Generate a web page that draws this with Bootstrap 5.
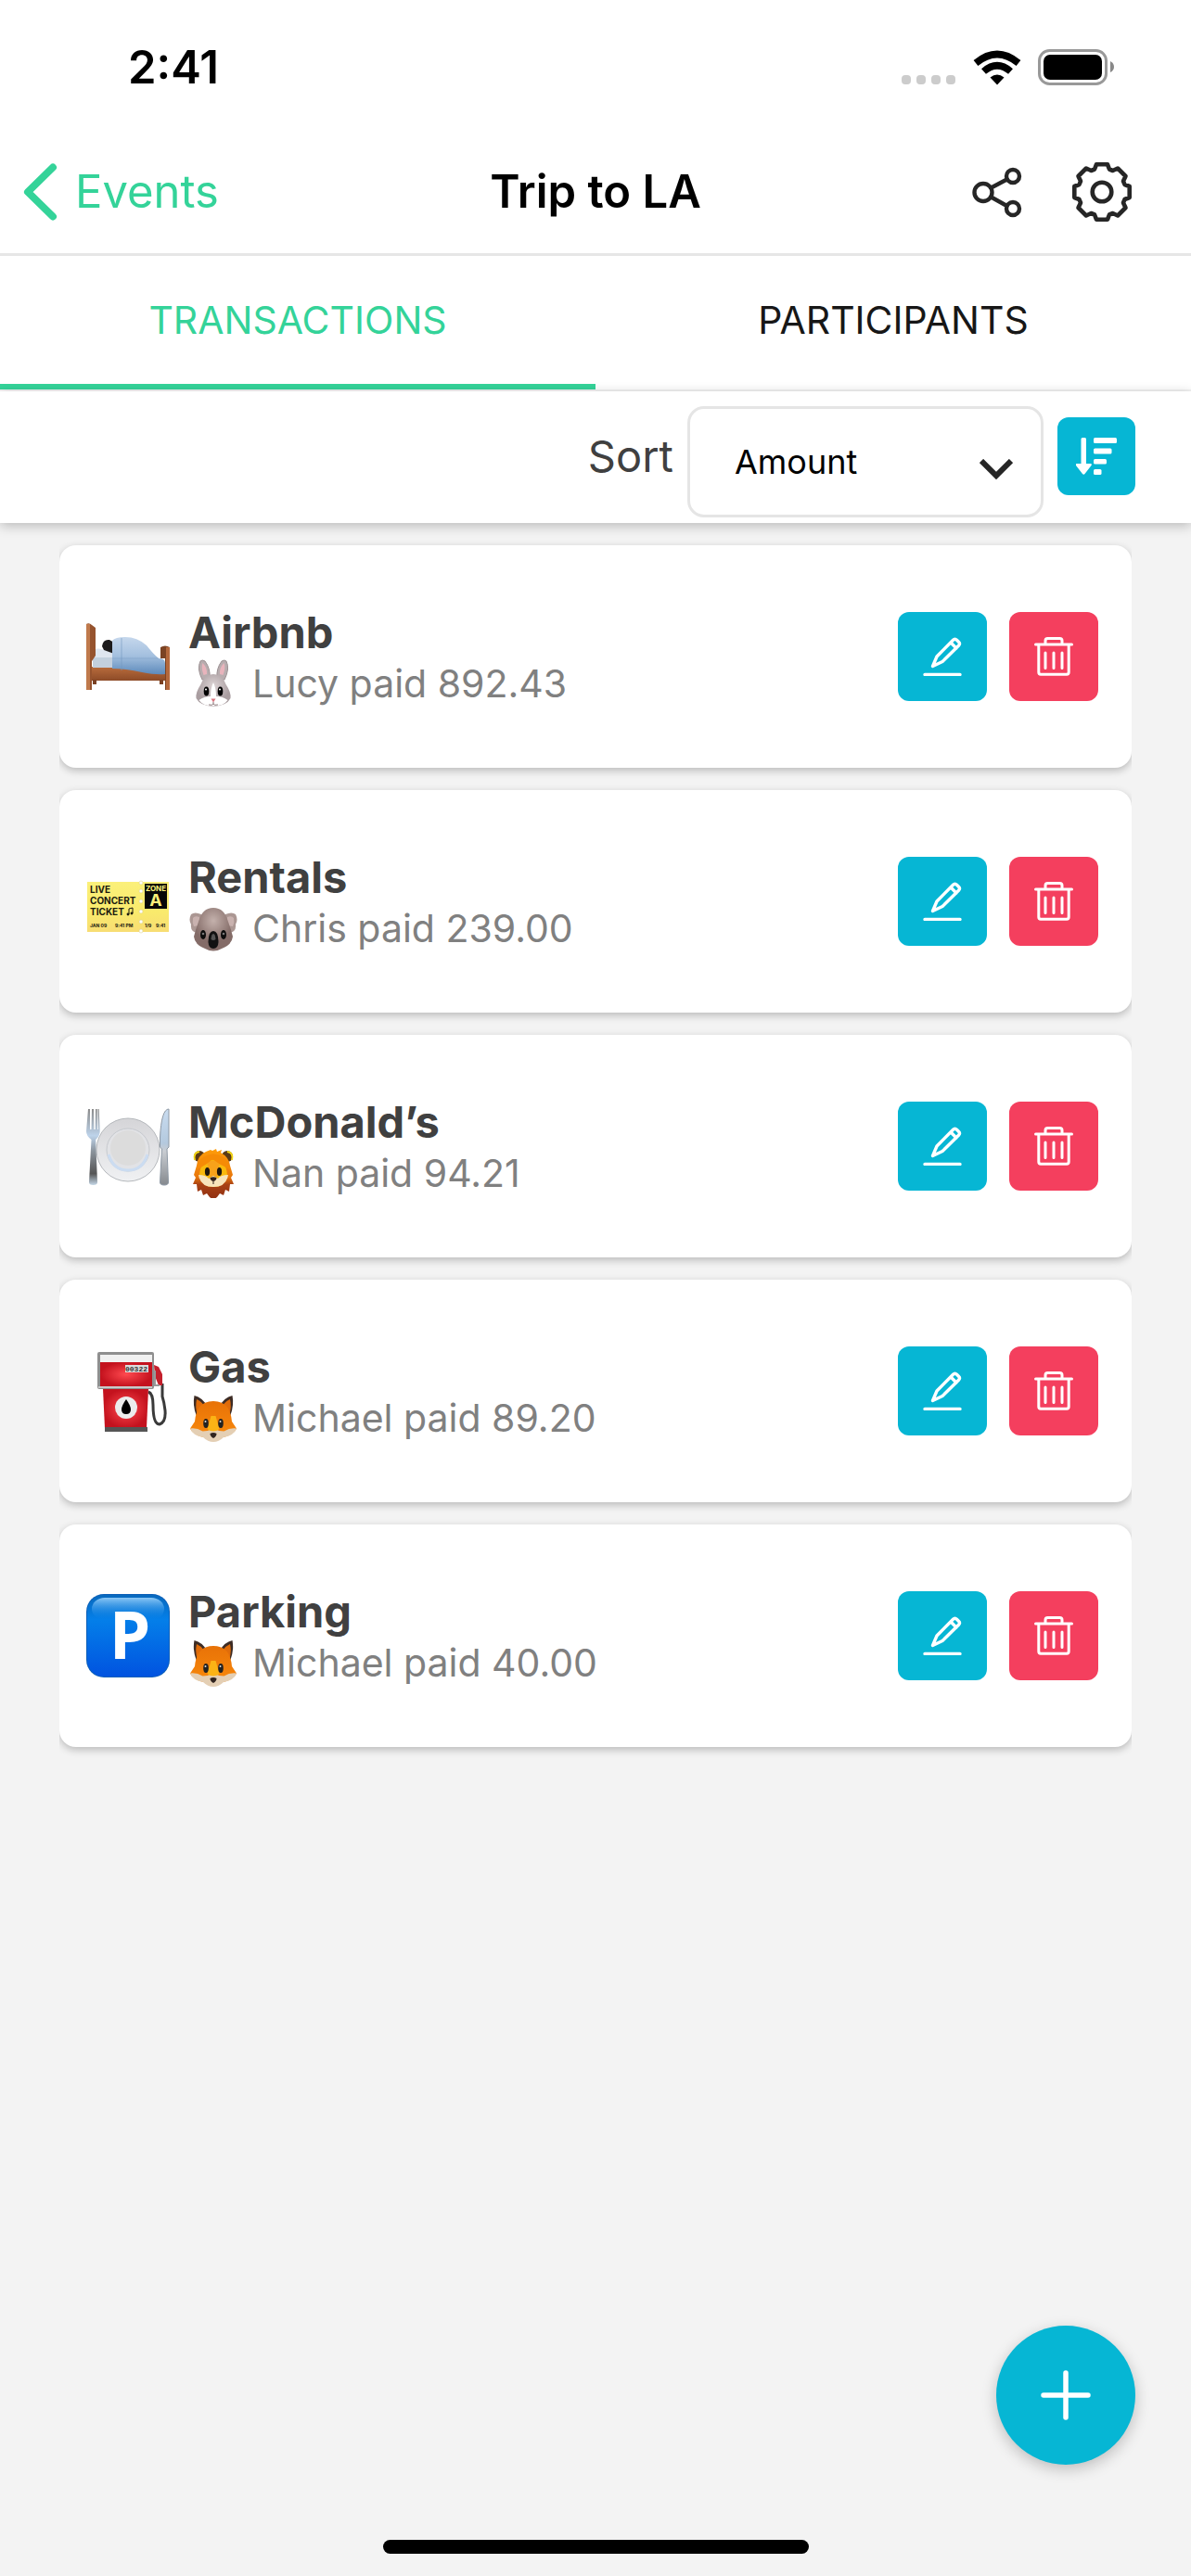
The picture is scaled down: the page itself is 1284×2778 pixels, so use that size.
<!DOCTYPE html>
<html lang="en">
<head>
<meta charset="utf-8">
<meta name="viewport" content="width=device-width, initial-scale=1">
<title>Trip to LA</title>
<link href="https://cdn.jsdelivr.net/npm/bootstrap@5.3.0/dist/css/bootstrap.min.css" rel="stylesheet">
<style>
  :root { --mint: #34d399; --cyan: #06b6d4; --rose: #f43f5e; --ink: #404040; }
  body { font-family: Inter, "Liberation Sans", sans-serif; font-size: 41px; line-height: 54px; background: #f3f3f3; color: #000; }
  .status-bar { height: 141px; padding: 4px 82px 0 138px; }
  .clock { font-size: 49px; font-weight: 600; }
  .top-nav { height: 135px; padding: 0 64px 0 25px; border-bottom: 3px solid #e6e6e6; font-size: 49px; }
  .nav-side { flex: 1 1 0; }
  .nav-start { padding-right: 39px; }
  .back-link { color: var(--mint); gap: 18px; }
  .page-title { font-size: 49px; line-height: 54px; font-weight: 600; }
  .icon-actions { gap: 52px; }
  .icon-btn { color: #262626; }
  .tab-strip .nav-link { height: 144px; border: 0; border-bottom: 6px solid transparent; border-radius: 0; background: none; color: #171717; padding: 0; }
  .tab-strip .nav-link.active { color: var(--mint); border-color: var(--mint); background: none; }
  .tab-strip { border-bottom: 2px solid #f3f3f3; }
  .sort-row { padding: 16px 60px 6px; gap: 15px; box-shadow: 0 3px 12px rgba(0,0,0,.24); position: relative; }
  .sort-label { font-size: 47px; color: var(--ink); margin-bottom: 12px; }
  .sort-select { width: 384px; height: 120px; padding: 0 90px 0 48px; border: 3px solid #e5e5e5; border-radius: 18px; font-size: 36px; color: #000;
    background-image: url("data:image/svg+xml,%3csvg xmlns='http://www.w3.org/2000/svg' viewBox='0 0 36 22'%3e%3cpath fill='none' stroke='%23262626' stroke-width='6' d='M2 2l16 16L34 2'/%3e%3c/svg%3e");
    background-size: 36px 22px; background-position: right 30px top 54px; }
  .tool-btn { width: 96px; height: 96px; border: 0; border-radius: 12px; color: #fff; padding: 0; }
  .tool-cyan { background: var(--cyan); }
  .tool-rose { background: var(--rose); }
  .sort-dir { width: 84px; height: 84px; margin-bottom: 12px; }
  .entries { gap: 24px; padding: 24px 64px; }
  .entry { height: 240px; padding: 0 36px 0 29px; border-radius: 18px; background: #fff; box-shadow: 0 3px 9px rgba(0,0,0,.24); clip-path: inset(-20px 0); }
  .entry-main { gap: 20px; }
  .entry-text { padding-top: 2px; }
  .entry-name { font-size: 47px; line-height: 56px; font-weight: 700; color: var(--ink); }
  .entry-sub { gap: 15px; color: #808080; }
  .entry-tools { gap: 24px; }
  .add-btn { width: 150px; height: 150px; right: 60px; bottom: 120px; border: 0; background: var(--cyan); color: #fff; box-shadow: 0 5px 16px rgba(0,0,0,.22); }
  .home-bar { width: 459px; height: 15px; border-radius: 8px; background: #000; margin-bottom: 24px; }
  svg { display: block; flex: none; }
  .ln { fill: none; stroke: currentColor; stroke-linecap: round; stroke-linejoin: round; }
</style>
<script src="https://cdn.jsdelivr.net/npm/bootstrap@5.3.0/dist/js/bootstrap.bundle.min.js" defer></script>
</head>
<body class="min-vh-100 d-flex flex-column">

<svg width="0" height="0" class="position-absolute" aria-hidden="true">
  <defs>
    <linearGradient id="wood" x1="0" x2="0" y1="0" y2="1"><stop offset="0" stop-color="#b96c3d"/><stop offset="1" stop-color="#8d4b27"/></linearGradient>
    <linearGradient id="quilt" x1="0" x2="0" y1="0" y2="1"><stop offset="0" stop-color="#c5d7ec"/><stop offset=".5" stop-color="#a4c0df"/><stop offset="1" stop-color="#5d8abb"/></linearGradient>
    <linearGradient id="paper" x1="0" x2="0" y1="0" y2="1"><stop offset="0" stop-color="#fbf07a"/><stop offset=".6" stop-color="#f9ea6c"/><stop offset="1" stop-color="#f8dd74"/></linearGradient>
    <linearGradient id="steel" x1="0" x2="0" y1="0" y2="1"><stop offset="0" stop-color="#8b8b8b"/><stop offset=".35" stop-color="#bdd3ea"/><stop offset=".55" stop-color="#8c959e"/><stop offset=".85" stop-color="#555"/><stop offset="1" stop-color="#c5d8e8"/></linearGradient>
    <linearGradient id="blade" x1="0" x2="0" y1="0" y2="1"><stop offset="0" stop-color="#c9dcf0"/><stop offset=".45" stop-color="#b4c9de"/><stop offset=".55" stop-color="#c9cdd2"/><stop offset="1" stop-color="#85898e"/></linearGradient>
    <linearGradient id="dish" x1="0" x2="0" y1="0" y2="1"><stop offset="0" stop-color="#d5d5d8"/><stop offset="1" stop-color="#f0f1f3"/></linearGradient>
    <radialGradient id="red"><stop offset="0" stop-color="#ff4a50"/><stop offset="1" stop-color="#c4121e"/></radialGradient>
    <linearGradient id="blue" x1="0" x2="0" y1="0" y2="1"><stop offset="0" stop-color="#0869bd"/><stop offset=".3" stop-color="#047fe9"/><stop offset="1" stop-color="#0153e0"/></linearGradient>
    <linearGradient id="gloss" x1="0" x2="0" y1="0" y2="1"><stop offset="0" stop-color="#8cc8f6"/><stop offset="1" stop-color="#047fe9" stop-opacity="0"/></linearGradient>
    <radialGradient id="fur" cy=".35"><stop offset="0" stop-color="#dcd3d4"/><stop offset="1" stop-color="#a99da0"/></radialGradient>
    <radialGradient id="koalaFur" cy=".3"><stop offset="0" stop-color="#c4b1ac"/><stop offset="1" stop-color="#846c68"/></radialGradient>
    <linearGradient id="mane" x1="0" x2="0" y1="0" y2="1"><stop offset="0" stop-color="#ff9d0a"/><stop offset=".55" stop-color="#e9780b"/><stop offset=".7" stop-color="#a84114"/><stop offset="1" stop-color="#8f2f12"/></linearGradient>
    <linearGradient id="foxFur" x1="0" x2="0" y1="0" y2="1"><stop offset="0" stop-color="#e87207"/><stop offset="1" stop-color="#f98a0c"/></linearGradient>
  </defs>
  <symbol id="i-edit" viewBox="0 0 42 42"><path class="ln" stroke-width="3.4" d="M2 40.400h38M10.500 31.500l4.500-10.500L32.500 3.200q2-2 4 0l2 2q2 2 0 4L21 26.500zM30 6l6 6"/></symbol>
  <symbol id="i-bin" viewBox="0 0 42 42"><path class="ln" stroke-width="3" d="M1.500 8h39M12 7.500V4q0-2.500 2.500-2.500h13Q30 1.500 30 4v3.500M4.800 8.500V38q0 2.200 2.200 2.200h28q2.200 0 2.200-2.200V8.500M12 17v16.500M21 17v16.500M30 17v16.500"/></symbol>
  <symbol id="e-fox" viewBox="0 0 54 54">
    <path fill="#3d2c25" d="M6.500 3q9 2 14 12l-12 9q-4-11-2-21zM47.500 3q-9 2-14 12l12 9q4-11 2-21z"/>
    <path fill="#e06c0a" d="M9 7q7 3 10 11l-9 6q-3-8-1-17zM45 7q-7 3-10 11l9 6q3-8 1-17z"/>
    <path fill="url(#foxFur)" d="M27 9q10 0 15.500 7 4 7 4.500 15l5 7.500q-4 9-25 11.500Q6 47.500 2 38.500L7 31q.5-8 4.500-15Q17 9 27 9z"/>
    <path fill="#e4cfb4" d="M2 38.500q7-1 13.500 3 6 0 11.500-3 5.500 3 11.500 3 6.500-4 13.500-3-3 8-14 9.500-5 5-11 5t-11-5Q5 46.500 2 38.500z"/>
    <path fill="#fbb315" d="M24.500 25h5l4 14q-6.500 5-13 0z"/>
    <ellipse cx="19" cy="33" rx="2.800" ry="5" fill="#222"/><ellipse cx="35" cy="33" rx="2.800" ry="5" fill="#222"/>
    <circle cx="18.500" cy="31" r="1" fill="#ddd"/><circle cx="34.500" cy="31" r="1" fill="#ddd"/>
    <path fill="#30241f" d="M23.500 44q3.500-2 7 0 0 3-3.500 5-3.500-2-3.500-5z"/>
  </symbol>
</svg>

<header class="bg-white">
  <div class="status-bar d-flex justify-content-between align-items-center">
    <span class="clock">2:41</span>
    <svg width="231" height="44" viewBox="0 0 231 44" role="img" aria-label="No service, Wi-Fi, battery full">
      <g fill="#ccc"><rect x="1" y="30" width="10" height="10" rx="4"/><rect x="17" y="30" width="10" height="10" rx="4"/><rect x="33" y="30" width="10" height="10" rx="4"/><rect x="49" y="30" width="10" height="10" rx="4"/></g>
      <g fill="none" stroke="#000" stroke-width="7.500"><path d="M81 17Q104 -2 127 17"/><path d="M89.500 26Q104 13.500 118.500 26"/></g>
      <path d="M96.500 32.500q7.500-6 15 0L104 40.500z"/>
      <rect x="149.500" y="3.500" width="72" height="36" rx="11" fill="none" stroke="#999" stroke-width="3"/><rect x="154" y="8" width="63" height="27" rx="7"/><path fill="#888" d="M226 15q4 2 4 6t-4 6z"/>
    </svg>
  </div>
  <nav class="top-nav d-flex align-items-center" aria-label="Page">
    <div class="nav-side nav-start d-flex"><a href="#" class="back-link d-flex align-items-center text-decoration-none">
      <svg width="38" height="62" viewBox="0 0 38 62"><path class="ln" stroke-width="8" d="M32 4.500L5 31l27 26.500"/></svg><span>Events</span></a></div>
    <h1 class="page-title text-center m-0">Trip to LA</h1>
    <div class="nav-side icon-actions d-flex justify-content-end align-items-center">
      <button type="button" class="icon-btn btn p-0 border-0" aria-label="Share"><svg width="56" height="56" viewBox="0 0 56 56"><g class="ln" stroke-width="4.400"><circle cx="12" cy="28.500" r="9.500"/><circle cx="44" cy="11" r="7"/><circle cx="44" cy="46" r="7"/><path d="M20.500 23.500l17-9M20.500 33.500l17 9.500"/></g></svg></button>
      <button type="button" class="icon-btn btn p-0 border-0" aria-label="Settings"><svg width="64" height="64" viewBox="-32 -32 64 64"><g class="ln" stroke-width="4.600"><circle r="10.300"/><path d="M-8-24.500L-6-29.700H6L8-24.500 11.700-23 17-25.500 25.500-17 23-11.700 24.500-8 29.700-6V6L24.500 8 23 11.700 25.500 17 17 25.500 11.700 23 8 24.500 6 29.700H-6L-8 24.500-11.700 23-17 25.500-25.500 17-23 11.700-24.500 8-29.700 6V-6L-24.500-8-23-11.700-25.500-17-17-25.500-11.700-23z"/></g></svg></button>
    </div>
  </nav>
  <ul class="tab-strip nav nav-fill" role="tablist">
    <li class="nav-item col-6" role="presentation"><button type="button" class="nav-link active w-100" role="tab" aria-selected="true">TRANSACTIONS</button></li>
    <li class="nav-item col-6" role="presentation"><button type="button" class="nav-link w-100" role="tab" aria-selected="false">PARTICIPANTS</button></li>
  </ul>
  <div class="sort-row d-flex justify-content-end align-items-center bg-white">
    <label class="sort-label" for="sortBy">Sort</label>
    <select id="sortBy" class="sort-select form-select"><option>Amount</option><option>Name</option></select>
    <button type="button" class="tool-btn tool-cyan sort-dir d-flex align-items-center justify-content-center" aria-label="Sort descending">
      <svg width="44" height="40" viewBox="0 0 44 40" fill="currentColor"><path d="M5.500 1.500Q5.500 0 7 0h2.500Q11 0 11 1.500V28h5q1.500.500.500 2L9.500 39q-1.200 1.500-2.500 0L0 30q-1-1.500.500-2h5z"/><rect x="19" width="25" height="6" rx="1.500"/><rect x="19" y="11.500" width="19.500" height="6" rx="1.500"/><rect x="19" y="23" width="14" height="5.500" rx="1.500"/><rect x="19" y="34" width="8.500" height="6" rx="1.500"/></svg>
    </button>
  </div>
</header>

<main class="entries d-flex flex-column flex-grow-1">
  <article class="entry d-flex align-items-center justify-content-between">
    <div class="entry-main d-flex align-items-center">
      <svg width="90" height="90" viewBox="0 6 90 90">
        <path fill="url(#wood)" d="M5 62h80v15H5z"/><path fill="#7b4123" d="M7 76h4v5H7zM79 76h4v5h-4z"/>
        <path fill="#c3d0de" d="M7 50h22v13H7z"/><path fill="#dfe6f0" d="M6 47q4-6 10-4l13 4v5H10q-5-1-4-5z"/>
        <path fill="#1d1b1c" d="M17 40q1-8 8-7l5 3v12l-11-4z"/>
        <path fill="url(#quilt)" d="M28 34q3-4 14-4 13 0 23 9 7 9 13 14 7 0 7 5v12q-10 1-25-2-18-4-32-4z"/>
        <path d="M38 31v35" fill="none" stroke="#7296bf" opacity=".6"/><path d="M28 53h50" fill="none" stroke="#7296bf" opacity=".4"/>
        <path fill="#96532e" d="M0 16q3-2 6 1l4 3v30l-4 6v31H0z"/><path fill="#c07a4c" d="M0 16h4v71H0z"/>
        <path fill="#7b4324" d="M80 41q5-3 10 0v46h-5V53h-5z"/><path fill="#b4683c" d="M86 41h4v46h-4z"/>
      </svg>
      <div class="entry-text">
        <div class="entry-name">Airbnb</div>
        <div class="entry-sub d-flex align-items-center">
          <svg width="54" height="54" viewBox="0 0 54 54"><g fill="#b8adaf" stroke="#9c9193"><path d="M15 23Q9 11 13 3q2-2 5 0 6 8 5 18zM39 23q6-12 2-20-2-2-5 0-6 8-5 18z"/></g><path fill="#e8b4bc" d="M16.500 18q-3-8-1-13 5 5 4.500 12zM37.500 18q3-8 1-13-5 5-4.500 12z"/><path fill="url(#fur)" d="M27 17q10 0 13.500 11 6 9 5 15-4 8-18.500 9Q12.500 51 8.500 43q-1-6 5-15Q17 17 27 17z"/><path fill="#fff" d="M27 26q3 6 3 15 7 0 12.500 4Q38 51.500 27 51.500T11.500 45Q17 41 24 41q0-9 3-15z"/><ellipse cx="19.500" cy="35.500" rx="2.800" ry="5"/><ellipse cx="34.500" cy="35.500" rx="2.800" ry="5"/><circle cx="19" cy="33.500" r="1" fill="#fff"/><circle cx="34" cy="33.500" r="1" fill="#fff"/><path fill="#d8747f" d="M24.500 43.500h5L27 47.500z"/><path d="M27 47v2m-5 1q4 1 5-1 1 2 5 1" fill="none" stroke="#8c7a7c"/></svg>
          <span>Lucy paid 892.43</span>
        </div>
      </div>
    </div>
    <div class="entry-tools d-flex">
      <button type="button" class="tool-btn tool-cyan d-flex align-items-center justify-content-center" aria-label="Edit Airbnb"><svg width="42" height="42"><use href="#i-edit"/></svg></button>
      <button type="button" class="tool-btn tool-rose d-flex align-items-center justify-content-center" aria-label="Delete Airbnb"><svg width="42" height="42"><use href="#i-bin"/></svg></button>
    </div>
  </article>

  <article class="entry d-flex align-items-center justify-content-between">
    <div class="entry-main d-flex align-items-center">
      <svg width="90" height="90" viewBox="0 -4 90 90" font-family="Inter, sans-serif" font-weight="700" fill="#1c1b10">
        <path fill="url(#paper)" d="M1 20h88v54H1z"/><path fill="#080808" d="M63 22h24v27H63z"/>
        <g fill="#fff" stroke="#d8cd80" stroke-width=".5"><circle cx="59" cy="21" r="2"/><circle cx="59" cy="30" r="2"/><circle cx="59" cy="41" r="2"/><circle cx="59" cy="52" r="2"/><circle cx="59" cy="63" r="2"/><circle cx="59" cy="73" r="2"/></g>
        <text x="4" y="32" font-size="10">LIVE</text><text x="4" y="44" font-size="10">CONCERT</text><text x="4" y="56" font-size="10">TICKET</text><path fill="none" stroke="#1c1b10" stroke-width="1" d="M46 55v-6l4-1v6"/><circle cx="45" cy="55" r="1.400"/><circle cx="49" cy="54" r="1.400"/>
        <g font-size="5"><text x="4" y="69">JAN 09</text><text x="31" y="69">9:41 PM</text><text x="63" y="69">1/9</text><text x="75" y="69">9:41</text></g>
        <g fill="#fbf07a" text-anchor="middle"><text x="75" y="30" font-size="8">ZONE</text><text x="75" y="46" font-size="18">A</text></g>
      </svg>
      <div class="entry-text">
        <div class="entry-name">Rentals</div>
        <div class="entry-sub d-flex align-items-center">
          <svg width="54" height="54" viewBox="0 0 54 54"><path fill="#ab9793" d="M14 12q-7-3-11 0-3 6 0 11-1 8 7 9l8-9zM40 12q7-3 11 0 3 6 0 11 1 8-7 9l-8-9z"/><path fill="#c9b2af" d="M12 15q-5-2-7 1-1 5 1 9l6-1zM42 15q5-2 7 1 1 5-1 9l-6-1z"/><path fill="url(#koalaFur)" d="M27 5q12 0 16 15 3 8 5 16-1 9-12 13-9 5-18 0Q7 45 6 36q2-8 5-16Q15 5 27 5z"/><ellipse cx="16" cy="34" rx="3" ry="5" fill="#0c0c0c"/><ellipse cx="38" cy="34" rx="3" ry="5" fill="#0c0c0c"/><circle cx="16" cy="33" r="1.300" fill="#777"/><circle cx="38" cy="33" r="1.300" fill="#777"/><path fill="#111" d="M27 30q5 0 5.500 11 0 8-5.500 8t-5.500-8Q22 30 27 30z"/><path fill="#555" d="M27 33q2 0 2.500 6-2.500 2-5 0 .5-6 2.500-6z"/></svg>
          <span>Chris paid 239.00</span>
        </div>
      </div>
    </div>
    <div class="entry-tools d-flex">
      <button type="button" class="tool-btn tool-cyan d-flex align-items-center justify-content-center" aria-label="Edit Rentals"><svg width="42" height="42"><use href="#i-edit"/></svg></button>
      <button type="button" class="tool-btn tool-rose d-flex align-items-center justify-content-center" aria-label="Delete Rentals"><svg width="42" height="42"><use href="#i-bin"/></svg></button>
    </div>
  </article>

  <article class="entry d-flex align-items-center justify-content-between">
    <div class="entry-main d-flex align-items-center">
      <svg width="90" height="90" viewBox="0 0 90 90">
        <circle cx="45" cy="49" r="34" fill="url(#dish)" stroke="#b5b8bc"/><circle cx="45" cy="49" r="23" fill="#e2e3e6" stroke="#c6c9ce"/><path fill="none" stroke="#cbdcf1" stroke-width="3" d="M24 54q5 17 21 17t21-17"/><circle cx="45" cy="47" r="19" fill="#dcdcdc"/>
        <path fill="url(#steel)" d="M2 5h2l0 22h1.500L6 5h2l.3 22H9.700L10 5h1.700l.3 22h.8L12.500 5h1.200l1 24q0 5-4.500 9L12 84q0 3-4.500 3T3 84l2.500-46Q0 34 0 29z"/>
        <path fill="url(#blade)" stroke="#8d98a4" d="M89 5q-8 0-9.500 31v10l2 2-2 36q0 3 4.500 3t4.500-3L87 48l2-2z"/>
      </svg>
      <div class="entry-text">
        <div class="entry-name">McDonald’s</div>
        <div class="entry-sub d-flex align-items-center">
          <svg width="54" height="54" viewBox="0 0 54 54"><circle cx="12" cy="9" r="6" fill="#5b3a16"/><circle cx="42" cy="9" r="6" fill="#5b3a16"/><path fill="none" stroke="#f5d716" stroke-width="2" d="M7 13Q5 5 12 4M47 13q2-8-5-9"/><path fill="url(#mane)" d="M26 3l4-2 1 3 5-2-1 3q9 5 10 14l3 10-2 3 3 7-4 0-1 8-4-2-2 6-4-2-3 4-4 3-4-3-3-4-4 2-2-6-4 2-1-8-4 0 3-7-2-3 3-10Q10 8 19 4l5-2z"/><path fill="#f9b90d" d="M27 13q14 0 15 16-2 13-15 13T12 29q1-16 15-16z"/><path fill="#f8a21a" d="M20 15q7-3 14 0l-3 16h-8z"/><path fill="#f8e4bb" d="M11 29q8 0 11 4l5-3 5 3q3-4 11-4-2 13-16 13T11 29z"/><path fill="#f68b06" d="M9 23Q11 11 20 8q9-4 18 2 6 5 7 13-10-4-19-11Q19 19 9 23z"/><ellipse cx="20.500" cy="25.500" rx="2.600" ry="4.500" fill="#1f170e"/><ellipse cx="33.500" cy="25.500" rx="2.600" ry="4.500" fill="#1f170e"/><path fill="#30201a" d="M23.500 32q3.500-1.500 7 0 0 3-3.500 4-3.500-1-3.500-4zM26.500 35h1v4h-1z"/></svg>
          <span>Nan paid 94.21</span>
        </div>
      </div>
    </div>
    <div class="entry-tools d-flex">
      <button type="button" class="tool-btn tool-cyan d-flex align-items-center justify-content-center" aria-label="Edit McDonald’s"><svg width="42" height="42"><use href="#i-edit"/></svg></button>
      <button type="button" class="tool-btn tool-rose d-flex align-items-center justify-content-center" aria-label="Delete McDonald’s"><svg width="42" height="42"><use href="#i-bin"/></svg></button>
    </div>
  </article>

  <article class="entry d-flex align-items-center justify-content-between">
    <div class="entry-main d-flex align-items-center">
      <svg width="90" height="90" viewBox="0 -1 90 90">
        <path fill="none" stroke="#3a3a3a" stroke-width="3" d="M67 45q5 2 5 14 0 21 7 21 7-2 6-15-1-9-3-15V36"/><path fill="#c4202c" d="M73 16l5 2 4 8v12h-4l-4-10z"/><path fill="none" stroke="#999" stroke-width="2" d="M74 22v16h5"/>
        <rect x="12" y="2" width="61" height="40" rx="2" fill="#8f8f8f"/><rect x="15" y="5" width="56" height="9" fill="#f1f1f1"/><rect x="15" y="13" width="56" height="26" fill="url(#red)"/><path fill="#c9c9c9" d="M13 39h58v2H13z"/>
        <rect x="42" y="16" width="25" height="8" fill="#ddd"/><text x="54" y="23" font-family="Liberation Mono, monospace" font-size="8" font-weight="700" text-anchor="middle" fill="#333">00322</text>
        <path fill="url(#red)" d="M18 42h49l-2 42H20z"/><path fill="#555" d="M20 83h46v5H20z"/><circle cx="43" cy="62" r="12" fill="#ececec"/><path d="M43 53q5 7 5 11 0 5-5 5t-5-5q0-4 5-11z"/>
      </svg>
      <div class="entry-text">
        <div class="entry-name">Gas</div>
        <div class="entry-sub d-flex align-items-center">
          <svg width="54" height="54"><use href="#e-fox"/></svg>
          <span>Michael paid 89.20</span>
        </div>
      </div>
    </div>
    <div class="entry-tools d-flex">
      <button type="button" class="tool-btn tool-cyan d-flex align-items-center justify-content-center" aria-label="Edit Gas"><svg width="42" height="42"><use href="#i-edit"/></svg></button>
      <button type="button" class="tool-btn tool-rose d-flex align-items-center justify-content-center" aria-label="Delete Gas"><svg width="42" height="42"><use href="#i-bin"/></svg></button>
    </div>
  </article>

  <article class="entry d-flex align-items-center justify-content-between">
    <div class="entry-main d-flex align-items-center">
      <svg width="90" height="90" viewBox="0 0 90 90">
        <rect width="90" height="90" rx="19" fill="#0b5fb8"/><rect x="1" y="1" width="88" height="88" rx="18" fill="url(#blue)"/><rect x="6" y="4" width="78" height="24" rx="14" fill="url(#gloss)"/>
        <text x="47" y="70" text-anchor="middle" font-family="Open Sans, sans-serif" font-weight="700" font-size="71" fill="#fff">P</text>
      </svg>
      <div class="entry-text">
        <div class="entry-name">Parking</div>
        <div class="entry-sub d-flex align-items-center">
          <svg width="54" height="54"><use href="#e-fox"/></svg>
          <span>Michael paid 40.00</span>
        </div>
      </div>
    </div>
    <div class="entry-tools d-flex">
      <button type="button" class="tool-btn tool-cyan d-flex align-items-center justify-content-center" aria-label="Edit Parking"><svg width="42" height="42"><use href="#i-edit"/></svg></button>
      <button type="button" class="tool-btn tool-rose d-flex align-items-center justify-content-center" aria-label="Delete Parking"><svg width="42" height="42"><use href="#i-bin"/></svg></button>
    </div>
  </article>
</main>

<button type="button" class="add-btn position-fixed rounded-circle d-flex align-items-center justify-content-center p-0" aria-label="Add transaction">
  <svg width="54" height="54" viewBox="0 0 54 54"><path class="ln" stroke-width="5.500" d="M27 3v48M3 27h48"/></svg>
</button>
<footer class="d-flex justify-content-center"><div class="home-bar"></div></footer>
</body>
</html>
